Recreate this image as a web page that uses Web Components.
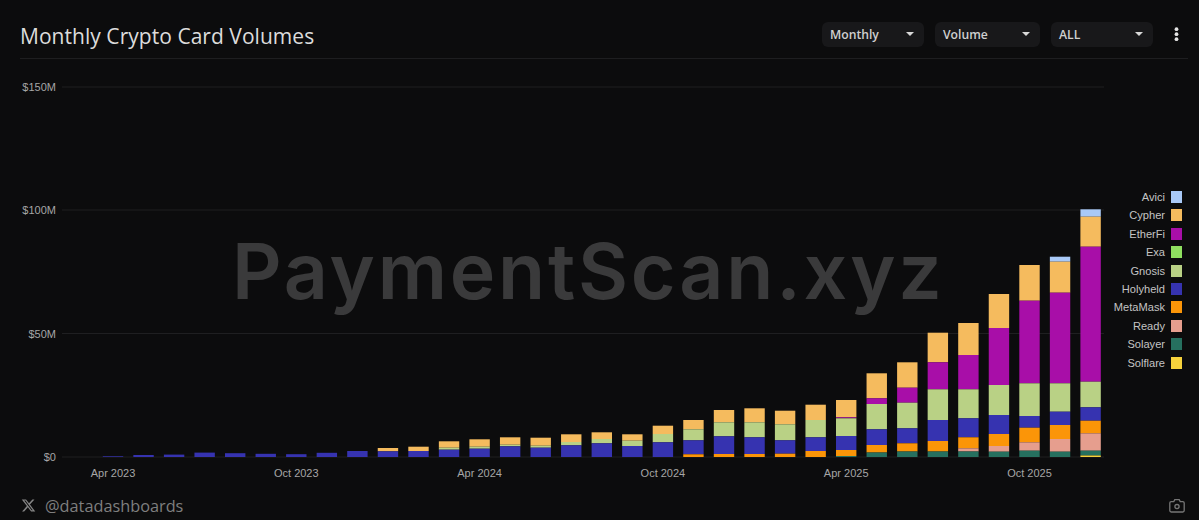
<!DOCTYPE html>
<html>
<head>
<meta charset="utf-8">
<title>Monthly Crypto Card Volumes</title>
<style>
    html, body { margin: 0; background: #0c0c0d; }
</style>
</head>
<body>
<chart-card>
    <span slot="title">Monthly Crypto Card Volumes</span>
    <chart-select slot="controls" label="Monthly" style="width:102px"></chart-select>
    <chart-select slot="controls" label="Volume" style="width:105px"></chart-select>
    <chart-select slot="controls" label="ALL" style="width:102px"></chart-select>
    <kebab-button slot="controls"></kebab-button>
    <stacked-bars slot="plot"></stacked-bars>
    <chart-legend slot="legend"></chart-legend>
    <span slot="credit">@datadashboards</span>
</chart-card>

<script>
const SERIES = [
    { key: 'A', name: 'Avici', color: '#a9c9f7' },
    { key: 'C', name: 'Cypher', color: '#f5bb5e' },
    { key: 'E', name: 'EtherFi', color: '#a80ea8' },
    { key: 'X', name: 'Exa', color: '#8fe060' },
    { key: 'G', name: 'Gnosis', color: '#b9d185' },
    { key: 'H', name: 'Holyheld', color: '#3633b0' },
    { key: 'M', name: 'MetaMask', color: '#fb9508' },
    { key: 'R', name: 'Ready', color: '#e69e8e' },
    { key: 'S', name: 'Solayer', color: '#26705f' },
    { key: 'F', name: 'Solflare', color: '#f6d23c' }
];

// one bar per month from Apr 2023, segment tops from the top of the stack down
const BARS = [
    'H456.3', 'H455', 'H454.6', 'H452.6', 'H453.2', 'H453.8', 'H454.2', 'H452.8',
    'H451', 'C448 H451.3', 'C446.7 H451', 'C441.3 G447.7 H449.7', 'C439.3 G446.7 H448.7',
    'C437.3 G444.7 H446.3', 'C437.7 G445.7 H447.7', 'C434.3 G442 H445.3',
    'C432.3 G439 H443.3', 'C434.3 G440.7 H446', 'C425.7 G434 H442.3',
    'C420 G429.3 H440.3 M454.3', 'C410 G422.3 H436.3 M454', 'C408.3 G422.3 H437.3 M454',
    'C410.7 G424.3 H440.3 M453.7', 'C404.7 G420 H437.3 M451',
    'C400 E417.3 G418.3 H436 M450 S456', 'C373.3 E398.3 G404 H429.3 M445 S452.5',
    'C362.3 E387.7 G402.7 H428.3 M443.3 S451.5', 'C332.7 E362.3 G389.3 H420 M441 S451.5',
    'C323 E355 G389.3 H418.3 M437.3 R448.3 S451.5', 'C294 E328 G385 H415 M434 R446 S451.7',
    'C265 E300.7 G383.3 H416 M427.7 R442.3 S450.7',
    'A256.7 C261.7 E292.7 G383.3 H411.7 M425 R439 S451.7',
    'A209.3 C216.7 E246.7 G381.7 H407.3 M420.7 R433.3 S450.7 F455.5'
];

const Y_TICKS = [['$150M', 87], ['$100M', 210], ['$50M', 333.5], ['$0', 457]];
const X_TICKS = [['Apr 2023', 0], ['Oct 2023', 6], ['Apr 2024', 12], ['Oct 2024', 18], ['Apr 2025', 24], ['Oct 2025', 30]];

class ChartCard extends HTMLElement {
    constructor() {
        super();

        this.attachShadow({ mode: 'open' });

        this.shadowRoot.innerHTML = `
            <style>
                :host {
                    display: flex;
                    flex-direction: column;
                    height: 520px;
                    background: #0c0c0d;
                    overflow: hidden;
                }
                header {
                    display: flex;
                    align-items: center;
                    justify-content: space-between;
                    height: 47px;
                    padding-top: 11px;
                    margin: 0 11px 0 20px;
                    border-bottom: 1px solid #1e1e20;
                }
                .title {
                    font: 400 21px "Open Sans", sans-serif;
                    color: #dcdcdc;
                    letter-spacing: 0.04px;
                    margin-top: 2px;
                }
                .controls {
                    display: flex;
                    align-items: center;
                    gap: 11px;
                }
                main {
                    display: flex;
                    justify-content: space-between;
                    height: 431px;
                }
                footer {
                    display: flex;
                    align-items: center;
                    justify-content: space-between;
                    padding: 0 14px 0 21px;
                    height: 30px;
                    color: #7f7f7f;
                }
                .credit {
                    display: flex;
                    align-items: center;
                    gap: 9px;
                    font: 400 16.3px "Open Sans", sans-serif;
                    margin-top: 1px;
                }
                svg { display: block; }
            </style>
            <header>
                <div class="title"><slot name="title"></slot></div>
                <div class="controls"><slot name="controls"></slot></div>
            </header>
            <main>
                <slot name="plot"></slot>
                <slot name="legend"></slot>
            </main>
            <footer>
                <div class="credit">
                    <svg width="15" height="15" viewBox="0 0 24 24" fill="#858585"><path d="M18.244 2.25h3.308l-7.227 8.26 8.502 11.24H16.17l-5.214-6.817L4.99 21.75H1.68l7.73-8.835L1.254 2.25H8.08l4.713 6.231zm-1.161 17.52h1.833L7.084 4.126H5.117z"/></svg>
                    <slot name="credit"></slot>
                </div>
                <svg width="16" height="15" viewBox="0 0 16 15" fill="none" stroke="#767676" stroke-width="1.3"><path d="M2.2 3.6h2.6l1-2h4.4l1 2h2.6a1.4 1.4 0 0 1 1.4 1.4v7.6a1.4 1.4 0 0 1-1.4 1.4H2.2a1.4 1.4 0 0 1-1.4-1.4V5a1.4 1.4 0 0 1 1.4-1.4z"/><circle cx="8" cy="8.6" r="2.1"/></svg>
            </footer>
        `;
    }
}

class ChartSelect extends HTMLElement {
    constructor() {
        super();

        this.attachShadow({ mode: 'open' });

        this.shadowRoot.innerHTML = `
            <style>
                :host {
                    display: flex;
                    align-items: center;
                    justify-content: space-between;
                    box-sizing: border-box;
                    height: 25px;
                    padding: 0 10px 0 8px;
                    background: #18181a;
                    border-radius: 6px;
                    font: 600 12.2px "Open Sans", sans-serif;
                    color: #cfcfcf;
                }
                i {
                    width: 0;
                    height: 0;
                    border-left: 4px solid transparent;
                    border-right: 4px solid transparent;
                    border-top: 4px solid #d8d8d8;
                    margin-top: -1px;
                }
            </style>
            <span></span><i></i>
        `;
    }

    connectedCallback() {
        this.shadowRoot.querySelector('span').textContent = this.getAttribute('label');
    }
}

class KebabButton extends HTMLElement {
    constructor() {
        super();

        this.attachShadow({ mode: 'open' });

        this.shadowRoot.innerHTML = `
            <style>
                :host { display: block; width: 24px; height: 25px; }
                svg { display: block; }
            </style>
            <svg width="24" height="25" viewBox="0 0 24 25" fill="#e4e4e4">
                <circle cx="12.5" cy="7.2" r="1.9"/>
                <circle cx="12.5" cy="12.2" r="1.9"/>
                <circle cx="12.5" cy="17.2" r="1.9"/>
            </svg>
        `;
    }
}

class StackedBars extends HTMLElement {
    constructor() {
        super();

        this.attachShadow({ mode: 'open' });
    }

    connectedCallback() {
        const base = 457;
        const pitch = 30.55;
        const barX = (i) => 113 + i * pitch;
        const colors = Object.fromEntries(SERIES.map((s) => [s.key, s.color]));

        const grid = Y_TICKS.map(([label, y]) => `
            <line x1="62" x2="1104" y1="${y}" y2="${y}" stroke="#1f1f21"/>
            <text x="56" y="${y + 4}" text-anchor="end">${label}</text>`).join('');

        const months = X_TICKS.map(([label, i]) =>
            `<text x="${barX(i)}" y="477" text-anchor="middle">${label}</text>`).join('');

        const bars = BARS.map((bar, i) => {
            const parts = bar.split(' ').map((p) => [p[0], parseFloat(p.slice(1))]);
            return parts.map(([key, top], n) => {
                const bottom = n + 1 < parts.length ? parts[n + 1][1] : base;
                return `<rect x="${barX(i) - 10.2}" y="${top}" width="20.4" height="${bottom - top}" fill="${colors[key]}"/>`;
            }).join('');
        }).join('');

        this.shadowRoot.innerHTML = `
            <style>
                :host { display: block; width: 1110px; height: 431px; }
                svg { display: block; }
                text { font: 400 11px "Liberation Sans", sans-serif; fill: #a6a6a6; }
                text.mark { font: 600 77px Inter, sans-serif; fill: #3a3a3b; letter-spacing: 2.8px; }
            </style>
            <svg width="1110" height="431" viewBox="0 59 1110 431">
                ${grid}
                <text class="mark" x="232" y="299">PaymentScan.xyz</text>
                ${bars}
                ${months}
            </svg>
        `;
    }
}

class ChartLegend extends HTMLElement {
    constructor() {
        super();

        this.attachShadow({ mode: 'open' });
    }

    connectedCallback() {
        const rows = SERIES.map((s) =>
            `<div class="row"><span>${s.name}</span><i style="background:${s.color}"></i></div>`).join('');

        this.shadowRoot.innerHTML = `
            <style>
                :host {
                    display: flex;
                    flex-direction: column;
                    align-items: flex-end;
                    gap: 6.4px;
                    padding: 132px 17px 0 0;
                    font: 400 11.1px "Liberation Sans", sans-serif;
                    color: #c4c4c4;
                }
                .row {
                    display: flex;
                    align-items: center;
                    gap: 6px;
                    height: 12px;
                }
                i { display: block; width: 11px; height: 12px; }
            </style>
            ${rows}
        `;
    }
}

customElements.define('chart-card', ChartCard);
customElements.define('chart-select', ChartSelect);
customElements.define('kebab-button', KebabButton);
customElements.define('stacked-bars', StackedBars);
customElements.define('chart-legend', ChartLegend);
</script>
</body>
</html>
